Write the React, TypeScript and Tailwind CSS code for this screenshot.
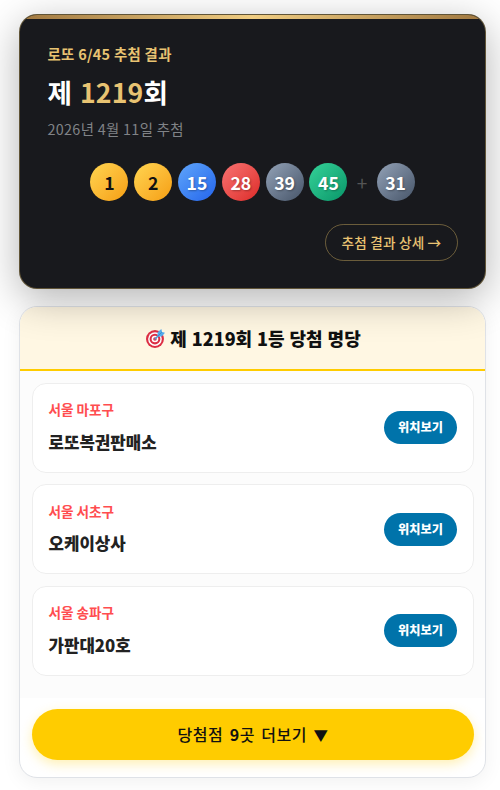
import React from "react";

const balls = [
    { n: 1, cls: "from-[#ffd54f] to-[#f59e0b] text-[#111]" },
    { n: 2, cls: "from-[#ffd54f] to-[#f59e0b] text-[#111]" },
    { n: 15, cls: "from-[#60a5fa] to-[#2563eb] text-white [text-shadow:1px_1px_2px_rgba(0,0,0,0.3)]" },
    { n: 28, cls: "from-[#f87171] to-[#dc2626] text-white [text-shadow:1px_1px_2px_rgba(0,0,0,0.3)]" },
    { n: 39, cls: "from-[#94a3b8] to-[#475569] text-white [text-shadow:1px_1px_2px_rgba(0,0,0,0.3)]" },
    { n: 45, cls: "from-[#34d399] to-[#059669] text-white [text-shadow:1px_1px_2px_rgba(0,0,0,0.3)]" },
];

const bonus = { n: 31, cls: "from-[#94a3b8] to-[#475569] text-white [text-shadow:1px_1px_2px_rgba(0,0,0,0.3)]" };

const stores = [
    { area: "서울 마포구", name: "로또복권판매소" },
    { area: "서울 서초구", name: "오케이상사" },
    { area: "서울 송파구", name: "가판대20호" },
];

function Ball({ n, cls }: { n: number; cls: string }) {
    return (
        <span className={`flex size-[38px] shrink-0 items-center justify-center rounded-full bg-linear-135 pt-[2px] text-[17.6px] font-bold leading-none ${cls}`}>
            {n}
        </span>
    );
}

function Target() {
    return (
        <svg width="19" height="19" viewBox="0 0 36 36" className="shrink-0">
            <circle cx="17" cy="19" r="17" fill="#dd2e44" />
            <circle cx="17" cy="19" r="13" fill="#fff" />
            <circle cx="17" cy="19" r="10.2" fill="#dd2e44" />
            <circle cx="17" cy="19" r="6.3" fill="#fff" />
            <circle cx="17" cy="19" r="3.4" fill="#dd2e44" />
            <path d="M17 19 29 7" stroke="#4a9fd8" strokeWidth="2.8" strokeLinecap="round" />
            <path d="M22 14V6l7-6 1.5 5.5L36 7l-6 7z" fill="#55acee" />
            <path d="M23 13 30 6" stroke="#3a87c2" strokeWidth="1.5" />
        </svg>
    );
}

export default function App() {
    return (
        <main className="h-[790px] overflow-hidden bg-white pt-[14px] pr-[14px] pl-[19px] font-['Noto_Sans_CJK_KR',sans-serif]">
            {/* Draw result */}
            <section className="relative z-10 h-[275px] overflow-hidden rounded-[18px] border border-[#e8c36a]/35 bg-[#18191d] shadow-[0_10px_40px_rgba(0,0,0,0.3)]">
                <div className="h-1 bg-linear-to-r from-[#a07840] via-[#f0cd82] to-[#a07840]" />
                <div className="px-[27px] pt-[25px]">
                    <p className="h-[20px] pl-[0.5px] text-[14.4px] font-bold leading-[20px] tracking-[0.3px] text-[#e8c372]">로또 6/45 추첨 결과</p>
                    <h1 className="mt-[8px] h-[40px] pl-[0.5px] text-[26.6px] font-bold leading-[40px] tracking-[0.2px] text-white [word-spacing:1.5px]">
                        제 <span className="text-[#e8c372]">1219</span>회
                    </h1>
                    <p className="mt-[7px] h-[20px] pl-[0.5px] text-[14.4px] leading-[20px] tracking-[0.3px] text-[#808387]">2026년 4월 11일 추첨</p>
                    <div className="mt-[24px] flex items-center justify-center gap-[5.8px]">
                        {balls.map((b) => (
                            <Ball key={b.n} {...b} />
                        ))}
                        <span className="w-[17.6px] text-center text-[19px] leading-none text-[#555]">+</span>
                        <Ball {...bonus} />
                    </div>
                    <div className="mt-[23px] flex justify-end">
                        <a className="flex h-[37px] w-[133px] items-center justify-center rounded-full border border-[#e8c36a]/40 pb-px text-[13.6px] font-medium tracking-[0.2px] text-[#e8c372]">
                            추첨 결과 상세 →
                        </a>
                    </div>
                </div>
            </section>

            {/* Winning stores */}
            <section className="mt-[17px] h-[472px] overflow-hidden rounded-[18px] border border-[#dfe2e7] bg-white shadow-[0_4px_20px_rgba(0,0,0,0.06)]">
                <h2 className="flex h-[64px] items-center justify-center gap-[5px] border-b-2 border-[#ffcc00] bg-[#fff7e3] pl-[2px] text-[18px] font-extrabold text-[#111]">
                    <Target />
                    <span className="[word-spacing:0.8px]">제 1219회 1등 당첨 명당</span>
                </h2>
                <div className="flex h-[327px] flex-col gap-[11.6px] bg-[#fcfcfc] py-[12px] pr-[11px] pl-[12px]">
                    {stores.map((s) => (
                        <div key={s.area} className="flex h-[89.8px] items-center justify-between rounded-[14px] border border-[#eee] bg-white pr-4 pl-[15.5px]">
                            <div>
                                <p className="text-[13.6px] font-bold leading-[20px] text-[#ff4d4f]">{s.area}</p>
                                <p className="mt-[9.5px] mb-[1.5px] text-[16.8px] font-extrabold leading-[26px] text-[#222]">{s.name}</p>
                            </div>
                            <button className="h-[33px] w-[73px] rounded-full bg-[#0073aa] pb-px text-[12.2px] font-extrabold text-white">위치보기</button>
                        </div>
                    ))}
                </div>
                <div className="pt-[11px] pr-[11px] pl-[12px]">
                    <button className="h-[51px] w-full rounded-full bg-[#ffcc00] pb-px text-[16px] font-medium tracking-[0.6px] text-[#111] shadow-[0_4px_12px_rgba(255,204,0,0.3)] [word-spacing:2px]">
                        당첨점 <b>9</b>곳 더보기 <span className="text-[14.5px]">▼</span>
                    </button>
                </div>
            </section>
        </main>
    );
}
